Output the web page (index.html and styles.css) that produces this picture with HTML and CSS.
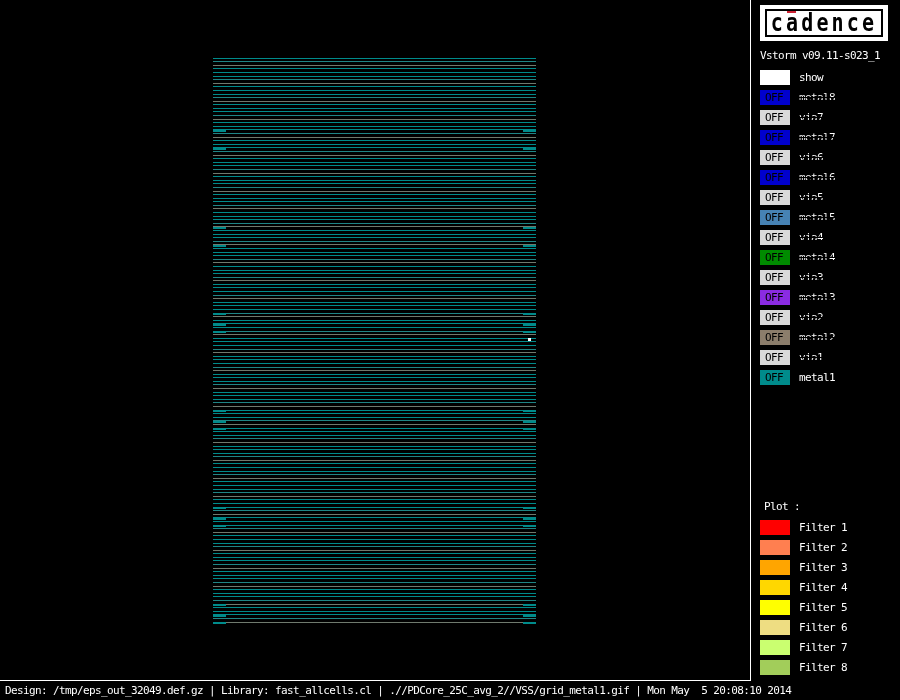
FILE: index.html
```html
<!DOCTYPE html>
<html>
<head>
<meta charset="utf-8" />
<title>Vstorm grid_metal1</title>
<link rel="stylesheet" href="styles.css">
</head>

<body>
<div id="screen">
	<div id="plot"><canvas id="grid" width="750" height="680"></canvas></div>
	<div id="side">
		<div id="logo"><div id="logo-frame"><span id="logo-bar"></span><span id="logo-text">cadence</span></div></div>
		<div id="version">Vstorm v09.11-s023_1</div>
		<div class="rows">
			<div class="row"><span class="swatch c-show"></span><span class="label">show</span></div>
			<div class="row"><span class="swatch c-blue">OFF</span><span class="label dim">metal8</span></div>
			<div class="row"><span class="swatch c-via">OFF</span><span class="label dim">via7</span></div>
			<div class="row"><span class="swatch c-blue">OFF</span><span class="label dim">metal7</span></div>
			<div class="row"><span class="swatch c-via">OFF</span><span class="label dim">via6</span></div>
			<div class="row"><span class="swatch c-blue">OFF</span><span class="label dim">metal6</span></div>
			<div class="row"><span class="swatch c-via">OFF</span><span class="label dim">via5</span></div>
			<div class="row"><span class="swatch c-steel">OFF</span><span class="label dim">metal5</span></div>
			<div class="row"><span class="swatch c-via">OFF</span><span class="label dim">via4</span></div>
			<div class="row"><span class="swatch c-green">OFF</span><span class="label dim">metal4</span></div>
			<div class="row"><span class="swatch c-via">OFF</span><span class="label dim">via3</span></div>
			<div class="row"><span class="swatch c-purple">OFF</span><span class="label dim">metal3</span></div>
			<div class="row"><span class="swatch c-via">OFF</span><span class="label dim">via2</span></div>
			<div class="row"><span class="swatch c-brown">OFF</span><span class="label dim">metal2</span></div>
			<div class="row"><span class="swatch c-via">OFF</span><span class="label dim">via1</span></div>
			<div class="row"><span class="swatch c-teal">OFF</span><span class="label">metal1</span></div>
		</div>
		<div id="filters">
			<div id="plot-title">Plot :</div>
			<div class="rows">
				<div class="row"><span class="swatch f1"></span><span class="label">Filter 1</span></div>
				<div class="row"><span class="swatch f2"></span><span class="label">Filter 2</span></div>
				<div class="row"><span class="swatch f3"></span><span class="label">Filter 3</span></div>
				<div class="row"><span class="swatch f4"></span><span class="label">Filter 4</span></div>
				<div class="row"><span class="swatch f5"></span><span class="label">Filter 5</span></div>
				<div class="row"><span class="swatch f6"></span><span class="label">Filter 6</span></div>
				<div class="row"><span class="swatch f7"></span><span class="label">Filter 7</span></div>
				<div class="row"><span class="swatch f8"></span><span class="label">Filter 8</span></div>
			</div>
		</div>
	</div>
	<div id="status">Design: /tmp/eps_out_32049.def.gz | Library: fast_allcells.cl | .//PDCore_25C_avg_2//VSS/grid_metal1.gif | Mon May  5 20:08:10 2014</div>
</div>
<script src="plot.js"></script>
</body>
</html>
```

FILE: styles.css
```css
html, body {
	margin:0;
	padding:0;
	background:#000000;}
#screen {
	display:grid;
	grid-template-columns:751px 149px;
	grid-template-rows:681px 19px;
	width:900px;
	height:700px;
	overflow:hidden;
	color:#ffffff;
	font-family:"DejaVu Sans Mono", monospace;
	font-size:11px;
	letter-spacing:-0.62px;}
#plot {
	border-right:1px solid #ffffff;
	border-bottom:1px solid #ffffff;}
#grid {display:block;}
#side {
	display:flex;
	flex-direction:column;
	padding:5px 0 6px 9px;}
#logo {
	width:128px;
	height:36px;
	box-sizing:border-box;
	padding:4px 5px;
	background:#ffffff;}
#logo-frame {
	position:relative;
	height:28px;
	box-sizing:border-box;
	border:2px solid #000000;
	color:#000000;
	font-weight:bold;
	font-size:20px;
	line-height:24px;
	letter-spacing:3.2px;
	text-align:center;}
#logo-text {
	display:inline-block;
	transform:scaleY(1.2);}
#logo-bar {
	position:absolute;
	top:0;
	left:20px;
	width:9px;
	height:2px;
	background:#cc2233;}
#version {
	height:14px;
	margin:8px 0 7px;
	line-height:14px;
	white-space:pre;}
.rows {
	display:flex;
	flex-direction:column;
	gap:5px;}
.row {
	display:flex;
	gap:9px;
	height:15px;
	line-height:15px;}
.swatch {
	box-sizing:border-box;
	width:30px;
	height:15px;
	padding-left:5px;
	color:#000000;}
.label {white-space:pre;}
.label.dim {
	background:linear-gradient(#ffffff 7px, #000000 7px, #000000 8px, #ffffff 8px, #ffffff 10px, #000000 10px, #000000 11px, #ffffff 11px);
	-webkit-background-clip:text;
	background-clip:text;
	color:transparent;}
#filters {margin-top:auto;}
#plot-title {
	height:14px;
	margin-bottom:6px;
	padding-left:4px;
	line-height:14px;}
#status {
	grid-column:1 / span 2;
	padding-left:5px;
	line-height:19px;
	white-space:pre;}
.c-show {background:#ffffff;}
.c-blue {background:#0000cd;}
.c-via {background:#d9d9d9;}
.c-steel {background:#4682b4;}
.c-green {background:#008b00;}
.c-purple {background:#8a2be2;}
.c-brown {background:#8b7d6b;}
.c-teal {background:#008b8b;}
.f1 {background:#ff0000;}
.f2 {background:#ff7f50;}
.f3 {background:#ffa500;}
.f4 {background:#ffd700;}
.f5 {background:#ffff00;}
.f6 {background:#eedd82;}
.f7 {background:#caff70;}
.f8 {background:#a2cd5a;}
```

FILE: plot.js
```js
var ctx = document.getElementById("grid").getContext("2d");

// rails repeat every 5 lines: two of them come out dimmer
var shade = ["#008b8b", "#1f8585", "#6f7a6e", "#008b8b", "#008b8b"];
for(var i=0; i<=157; i++) {
	ctx.fillStyle = shade[i%5];
	ctx.fillRect(213, 58+Math.floor(i*3.592+0.1), 323, 1);
}

// thicker stubs at both ends of the power rails
var stubs = [130,148,227,245,313,324,331,410,421,428,507,518,525,604,615,622];
ctx.fillStyle = "#008b8b";
for(i=0; i<stubs.length; i++) {
	ctx.fillRect(213, stubs[i], 13, 2);
	ctx.fillRect(523, stubs[i], 13, 2);
}

ctx.fillStyle = "#ffffff";
ctx.fillRect(528, 338, 3, 3);
```
